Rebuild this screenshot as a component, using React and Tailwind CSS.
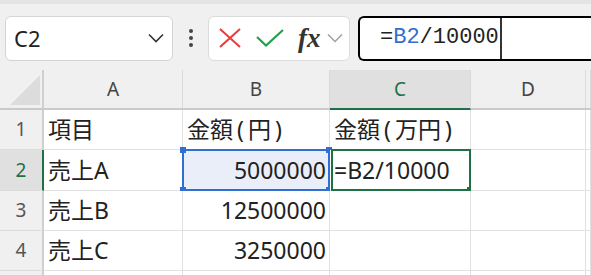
import React from "react";

const cols = [
  { key: "A", w: "w-[139px]" },
  { key: "B", w: "w-[147px]" },
  { key: "C", w: "w-[141px]" },
  { key: "D", w: "w-[115px]" },
  { key: "E", w: "flex-1" },
];

const rows = [
  { n: 1, h: "h-[40px]", cells: ["項目", "金額(円)", "金額(万円)", "", ""] },
  { n: 2, h: "h-[41px]", cells: ["売上A", "5000000", "=B2/10000", "", ""] },
  { n: 3, h: "h-[40px]", cells: ["売上B", "12500000", "", "", ""] },
  { n: 4, h: "h-[40px]", cells: ["売上C", "3250000", "", "", ""] },
  { n: null, h: "h-[40px]", cells: ["", "", "", "", ""] },
];

// parens in the sheet font sit wider than Noto's, so pad them a little
const renderText = (value) =>
  value.split(/([()])/).map((part, i) =>
    part === "(" || part === ")" ? (
      <span key={i} className="px-[4px]">
        {part}
      </span>
    ) : (
      part
    )
  );

const Handle = ({ className }) => (
  <div className={"absolute w-[6px] h-[6px] " + className} />
);

const Cell = ({ row, col, value }) => {
  const numeric = /^\d+$/.test(value);
  const isB2 = row === 2 && col === "B";
  const isC2 = row === 2 && col === "C";
  return (
    <div
      className={
        "relative flex items-center border-r border-b border-[#e1e1e1] text-[23px] text-[#222] " +
        (isB2 ? "bg-[#e9eef8] " : "bg-white ") +
        (numeric ? "justify-end pr-[3px] " : "pl-[4px] ") +
        cols.find((c) => c.key === col).w
      }
    >
      <span className="whitespace-nowrap leading-none">{renderText(value)}</span>
      {isB2 && (
        <>
          <div className="absolute -left-[1px] -top-[1px] -right-[1px] -bottom-[1px] border-2 border-[#2f6fd1]" />
          <Handle className="bg-[#2f6fd1] -left-[3px] -top-[3px]" />
          <Handle className="bg-[#2f6fd1] -left-[3px] -bottom-[3px]" />
          <Handle className="bg-[#2f6fd1] -right-[3px] -top-[3px]" />
          <Handle className="bg-[#2f6fd1] -right-[3px] -bottom-[3px]" />
        </>
      )}
      {isC2 && (
        <>
          <div className="absolute left-[1px] -top-[1px] -right-[1px] -bottom-[1px] border-2 border-[#1e7145]" />
          <Handle className="bg-[#1e7145] -right-[3px] -bottom-[3px]" />
        </>
      )}
    </div>
  );
};

export default function App() {
  return (
    <div
      className="w-[591px] h-[275px] overflow-hidden bg-white"
      style={{ fontFamily: '"Noto Sans", "Noto Sans CJK JP", sans-serif' }}
    >
      {/* toolbar */}
      <div className="h-[70px] bg-[#f0f0f0] border-t-[4px] border-[#e4e4e4] flex items-center pt-[5px] pb-[3px] pl-[5px]">
        <div className="w-[168px] h-[45px] bg-white border border-[#d4d4d4] rounded-[6px] flex items-center justify-between pl-[8px] pr-[8px]">
          <span className="text-[22px] text-[#222] leading-none">C2</span>
          <svg width="16" height="10" viewBox="0 0 16 10" fill="none" stroke="#333" strokeWidth="1.6">
            <path d="M1 1.5 L8 8.5 L15 1.5" />
          </svg>
        </div>
        <div className="w-[35px] flex flex-col items-center gap-[3px]">
          <div className="w-[4px] h-[4px] rounded-full bg-[#444]" />
          <div className="w-[4px] h-[4px] rounded-full bg-[#444]" />
          <div className="w-[4px] h-[4px] rounded-full bg-[#444]" />
        </div>
        <div className="w-[142px] h-[45px] bg-white border border-[#dcdcdc] rounded-[6px] flex items-center pl-[10px]">
          <svg width="22" height="20" viewBox="0 0 22 20" fill="none" stroke="#e9393a" strokeWidth="2">
            <path d="M1 1 L21 19 M21 1 L1 19" />
          </svg>
          <svg className="ml-[15px]" width="28" height="18" viewBox="0 0 28 18" fill="none" stroke="#21a046" strokeWidth="2.2">
            <path d="M1 8 L10 16.5 L27 1" />
          </svg>
          <span
            className="ml-[14px] text-[27px] italic font-bold text-[#333] leading-none"
            style={{ fontFamily: '"Liberation Serif", serif' }}
          >
            fx
          </span>
          <svg className="ml-[6px]" width="16" height="10" viewBox="0 0 16 10" fill="none" stroke="#a0a0a0" strokeWidth="1.5">
            <path d="M1 1.5 L8 8.5 L15 1.5" />
          </svg>
        </div>
        <div className="ml-[8px] flex-1 h-[45px] bg-white border-2 border-black rounded-l-[6px] border-r-0 flex items-stretch pl-[20px]">
          <div
            className="flex items-center text-[22px] leading-none border-r-2 border-[#333] pr-[1px]"
            style={{ fontFamily: '"Liberation Mono", monospace' }}
          >
            <span className="text-[#222]">=</span>
            <span className="text-[#2f6fd1]">B2</span>
            <span className="text-[#222]">/10000</span>
          </div>
        </div>
      </div>

      {/* column header */}
      <div className="flex h-[40px] bg-[#f0f0f0] border-b-2 border-[#cacaca]">
        <div className="w-[44px] border-r-2 border-[#cfcfcf] relative">
          <div
            className="absolute left-[10px] top-[5px] w-[30px] h-[30px] bg-[#dcdcdc]"
            style={{ clipPath: "polygon(100% 0, 100% 100%, 0 100%)" }}
          />
        </div>
        {cols.map((c) => (
          <div
            key={c.key}
            className={
              "flex items-center justify-center border-r border-[#dadada] text-[19px] " +
              c.w +
              (c.key === "C"
                ? " bg-[#e0e0e0] text-[#1e7145] border-b-2 border-b-[#1e7145] -mb-[2px]"
                : " text-[#444]")
            }
          >
            {c.key === "E" ? "" : c.key}
          </div>
        ))}
      </div>

      {/* rows */}
      {rows.map((r, idx) => (
        <div key={idx} className={"flex " + r.h}>
          <div
            className={
              "w-[44px] flex items-center justify-center border-b border-[#dcdcdc] border-r-2 text-[19px] " +
              (r.n === 2
                ? "bg-[#e0e0e0] text-[#1e7145] border-r-[#1e7145]"
                : "bg-[#f0f0f0] text-[#555] border-r-[#cfcfcf]")
            }
          >
            {r.n}
          </div>
          {cols.map((c, i) => (
            <Cell key={c.key} row={r.n} col={c.key} value={r.cells[i]} />
          ))}
        </div>
      ))}
    </div>
  );
}
